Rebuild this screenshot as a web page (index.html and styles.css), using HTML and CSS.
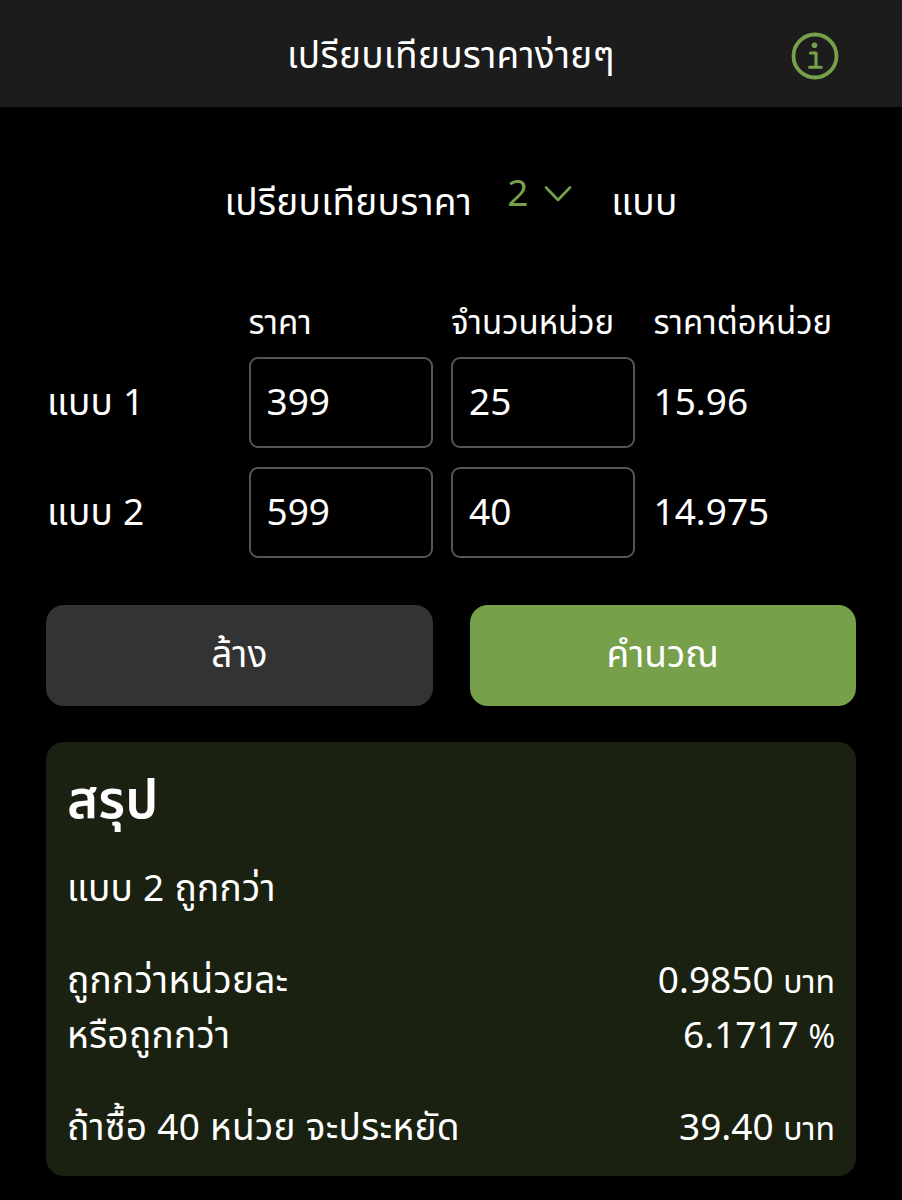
FILE: index.html
```html
<!DOCTYPE html>
<html lang="th">
<head>
    <meta charset="UTF-8">
    <meta name="viewport" content="width=device-width, initial-scale=1.0">
    <title>เปรียบเทียบราคาง่ายๆ</title>
    <link rel="stylesheet" href="styles.css">
</head>
<body>
    <header class="navbar">
        <h1 class="navbar-title">เปรียบเทียบราคาง่ายๆ</h1>
        <button class="info-btn" type="button">
            <svg width="48" height="48" viewBox="0 0 48 48" fill="none" stroke="currentColor">
                <circle cx="24" cy="24" r="21.5" stroke-width="3.8"/>
                <path d="M19.5 21H25V35.2M18.6 35.2H30.2" stroke-width="3.1" stroke-linecap="round" stroke-linejoin="round"/>
                <circle cx="23.5" cy="13.2" r="2.8" fill="currentColor" stroke="none"/>
            </svg>
        </button>
    </header>

    <main class="container">
        <div class="option-count">
            <span class="count-label">เปรียบเทียบราคา</span>
            <button class="count-select" type="button">
                <span>2</span>
                <svg width="28" height="18" viewBox="0 0 28 18" fill="none" stroke="currentColor" stroke-width="2.6" stroke-linecap="round" stroke-linejoin="round">
                    <path d="M2 2.5L14 15L26 2.5"/>
                </svg>
            </button>
            <span class="count-label">แบบ</span>
        </div>

        <form id="compareForm">
            <div class="price-table">
                <span></span>
                <span class="column-title">ราคา</span>
                <span class="column-title">จำนวนหน่วย</span>
                <span class="column-title">ราคาต่อหน่วย</span>

                <label class="row-label" for="price1">แบบ 1</label>
                <input type="text" id="price1" value="399">
                <input type="text" id="unit1" value="25">
                <span class="unit-price">15.96</span>

                <label class="row-label" for="price2">แบบ 2</label>
                <input type="text" id="price2" value="599">
                <input type="text" id="unit2" value="40">
                <span class="unit-price">14.975</span>
            </div>

            <div class="buttons">
                <button type="reset" class="btn clear-btn">ล้าง</button>
                <button type="button" class="btn calculate-btn">คำนวณ</button>
            </div>
        </form>

        <section class="summary">
            <h2>สรุป</h2>
            <p class="cheaper">แบบ 2 ถูกกว่า</p>
            <div class="summary-row">
                <span class="summary-label">ถูกกว่าหน่วยละ</span>
                <span>0.9850 <small>บาท</small></span>
            </div>
            <div class="summary-row">
                <span class="summary-label">หรือถูกกว่า</span>
                <span>6.1717 <small>%</small></span>
            </div>
            <div class="summary-row saving">
                <span class="summary-label">ถ้าซื้อ 40 หน่วย จะประหยัด</span>
                <span>39.40 <small>บาท</small></span>
            </div>
        </section>
    </main>
</body>
</html>
```

FILE: styles.css
```css
* {
    box-sizing: border-box;
}

body {
    font-family: "Noto Sans", "Noto Sans Thai", sans-serif;
    font-size: 37px;
    line-height: 55px;
    margin: 0;
    background-color: #000;
    color: #fff;
}

button,
input {
    font: inherit;
    color: inherit;
}

button {
    border: none;
    padding: 0;
    background: none;
    cursor: pointer;
}

.navbar {
    display: grid;
    grid-template-columns: 48px 1fr 48px;
    align-items: center;
    height: 107px;
    padding: 4px 63px 0;
    background-color: #1c1c1c;
}

.navbar-title {
    grid-column: 2;
    margin: 0;
    padding-bottom: 4px;
    font-size: 37px;
    font-weight: 400;
    letter-spacing: 0.3px;
    text-align: center;
}

.info-btn {
    display: flex;
    color: #77a04a;
}

.container {
    padding: 0 46px;
}

.option-count {
    display: flex;
    justify-content: center;
    gap: 35px;
    padding-top: 66px;
    height: 191px;
}

.count-label,
.row-label,
.cheaper,
.summary-label {
    letter-spacing: 0.3px;
}

.count-select {
    display: flex;
    align-items: center;
    gap: 16px;
    height: 36px;
    padding-right: 4px;
    color: #77a04a;
}

.count-select svg {
    margin-top: 6px;
}

.price-table {
    display: grid;
    grid-template-columns: repeat(4, 1fr);
    grid-template-rows: 40px 91px 91px;
    row-gap: 19px;
}

.column-title {
    font-size: 33px;
    line-height: 48px;
    white-space: nowrap;
}

.row-label,
.unit-price {
    line-height: 88px;
}

.row-label {
    padding-left: 1px;
}

.price-table input {
    width: calc(100% - 18.5px);
    height: 91px;
    padding: 0 16px 5px;
    border: 2px solid #555;
    border-radius: 9px;
    background-color: #000;
}

.buttons {
    display: grid;
    grid-template-columns: 1fr 1fr;
    gap: 37px;
    margin-top: 47px;
}

.btn {
    height: 101px;
    padding-bottom: 6px;
    border-radius: 18px;
}

.clear-btn {
    background-color: #333;
}

.calculate-btn {
    background-color: #77a04a;
}

.summary {
    height: 434px;
    margin-top: 36px;
    padding: 19px 21px 0;
    border-radius: 18px;
    background-color: #1a2110;
}

.summary h2 {
    margin: 0;
    font-size: 53px;
    font-weight: 600;
    line-height: 74px;
}

.cheaper {
    margin: 24px 0 37px;
}

.summary-row {
    display: flex;
    justify-content: space-between;
}

.summary-row small {
    font-size: 32px;
    line-height: 1;
}

.saving {
    margin-top: 37px;
}
```
